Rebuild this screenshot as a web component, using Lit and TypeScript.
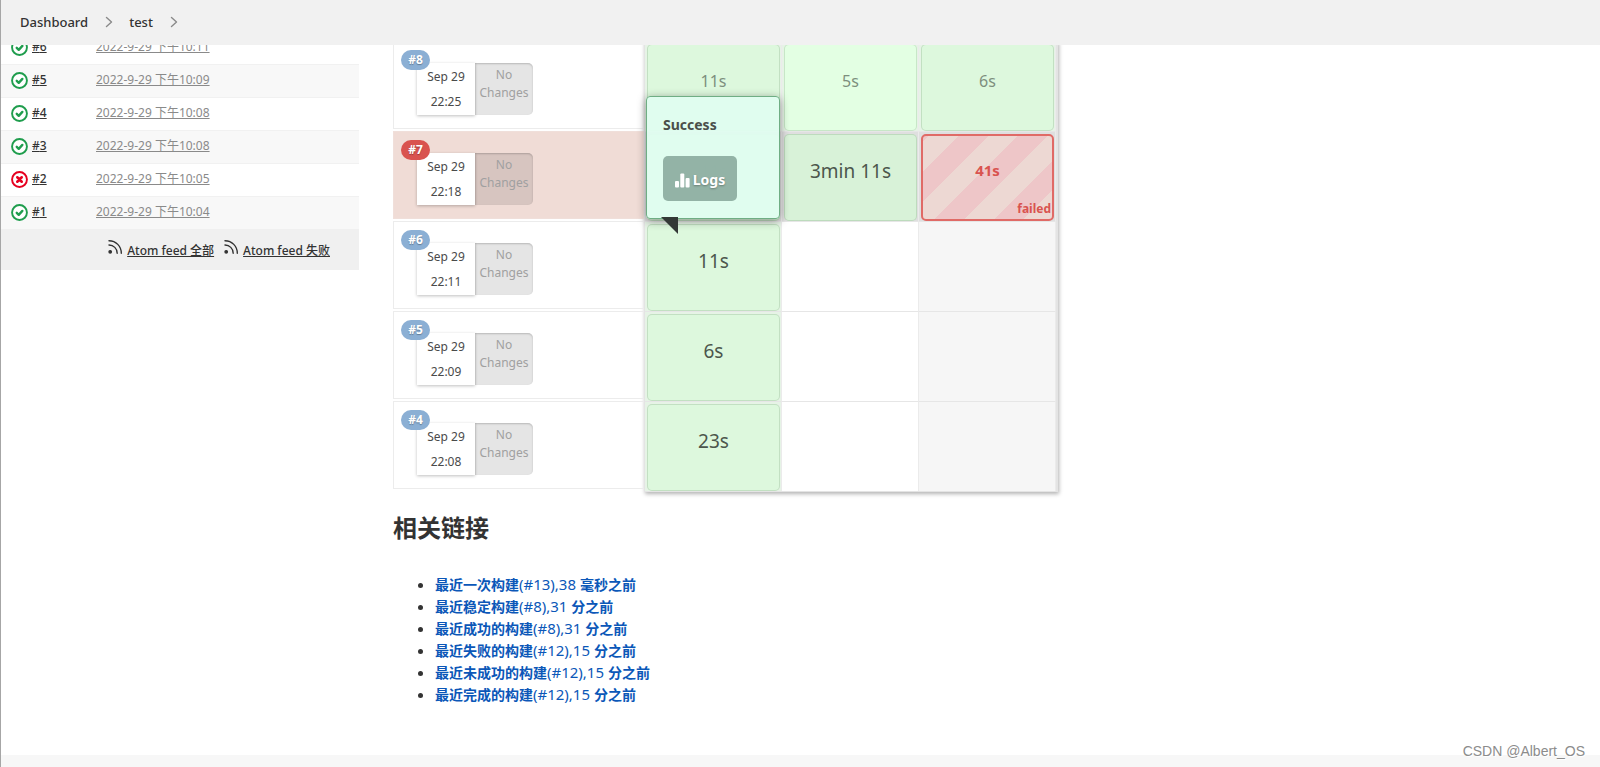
import { LitElement, html, css, svg, nothing } from "lit";
import { customElement } from "lit/decorators.js";
import { classMap } from "lit/directives/class-map.js";

interface Build {
  id: number;
  time: string;
  ok: boolean;
}

interface Stage {
  text: string;
  kind: "ok" | "failed" | "empty";
  tone?: "bright" | "dim";
  small?: boolean;
  popup?: boolean;
}

interface Run {
  id: number;
  date: string;
  time: string;
  failed?: boolean;
  stages: Stage[];
}

const BUILDS: Build[] = [
  { id: 6, time: "2022-9-29 下午10:11", ok: true },
  { id: 5, time: "2022-9-29 下午10:09", ok: true },
  { id: 4, time: "2022-9-29 下午10:08", ok: true },
  { id: 3, time: "2022-9-29 下午10:08", ok: true },
  { id: 2, time: "2022-9-29 下午10:05", ok: false },
  { id: 1, time: "2022-9-29 下午10:04", ok: true },
];

const EMPTY: Stage = { text: "", kind: "empty" };

const RUNS: Run[] = [
  {
    id: 8,
    date: "Sep 29",
    time: "22:25",
    stages: [
      { text: "11s", kind: "ok", small: true },
      { text: "5s", kind: "ok", small: true, tone: "bright" },
      { text: "6s", kind: "ok", small: true },
    ],
  },
  {
    id: 7,
    date: "Sep 29",
    time: "22:18",
    failed: true,
    stages: [
      { text: "11s", kind: "ok", small: true, popup: true },
      { text: "3min 11s", kind: "ok", tone: "dim" },
      { text: "41s", kind: "failed", small: true },
    ],
  },
  { id: 6, date: "Sep 29", time: "22:11", stages: [{ text: "11s", kind: "ok" }, EMPTY, EMPTY] },
  { id: 5, date: "Sep 29", time: "22:09", stages: [{ text: "6s", kind: "ok" }, EMPTY, EMPTY] },
  { id: 4, date: "Sep 29", time: "22:08", stages: [{ text: "23s", kind: "ok" }, EMPTY, EMPTY] },
];

const LINKS: [string, string, string][] = [
  ["最近一次构建", "(#13),38 ", "毫秒之前"],
  ["最近稳定构建", "(#8),31 ", "分之前"],
  ["最近成功的构建", "(#8),31 ", "分之前"],
  ["最近失败的构建", "(#12),15 ", "分之前"],
  ["最近未成功的构建", "(#12),15 ", "分之前"],
  ["最近完成的构建", "(#12),15 ", "分之前"],
];

const statusIcon = (ok: boolean) => html`<svg
  class="status"
  viewBox="0 0 16 16"
  role="img"
  aria-label=${ok ? "Success" : "Failed"}
>
  <circle cx="8" cy="8" r="7" fill="#fff" stroke=${ok ? "#1f9d4d" : "#e6001f"} stroke-width="1.8" />
  ${ok
    ? svg`<path d="M5.4 8.3l1.900 1.900 3.400-3.700" fill="none" stroke="#1f9d4d" stroke-width="2.200" stroke-linecap="round" stroke-linejoin="round" />`
    : svg`<path d="M5.9 5.9l4.2 4.2M10.1 5.9l-4.2 4.2" fill="none" stroke="#e6001f" stroke-width="2.4" stroke-linecap="round" />`}
</svg>`;

const feedIcon = html`<svg class="feed-icon" viewBox="0 0 14 14" aria-hidden="true">
  <g fill="none" stroke="#333" stroke-width="1.4" stroke-linecap="round">
    <path d="M1 .8c7 0 12.3 5.400 12.3 12.400" />
    <path d="M1 5c4.600 0 8.200 3.600 8.200 8.200" />
    <circle cx="2.200" cy="11.800" r="1.200" fill="#333" />
  </g>
</svg>`;

const chevron = html`<svg class="chevron" viewBox="0 0 8 12" aria-hidden="true">
  <path d="M1.500 1.500L6.500 6l-5 4.500" fill="none" stroke="#8a8a8a" stroke-width="1.400" stroke-linecap="round" stroke-linejoin="round" />
</svg>`;

@customElement("app-root")
export class AppRoot extends LitElement {
  static styles = css`
    :host {
      display: flex;
      flex-direction: column;
      box-sizing: border-box;
      height: 100vh;
      overflow: hidden;
      border-left: 1px solid #a6a6a6;
      background: #fff;
      color: #333;
      font-family: "Noto Sans", "Noto Sans CJK SC", sans-serif;
      font-size: 12px;
    }
    a {
      color: inherit;
    }
    ul,
    ol {
      list-style: none;
      margin: 0;
      padding: 0;
    }
    table {
      border-collapse: separate;
      border-spacing: 0;
    }
    td,
    th {
      padding: 0;
      font-weight: inherit;
      text-align: left;
    }
    .crumbs {
      position: relative;
      z-index: 5;
      flex: none;
      height: 45px;
      background: #f1f1f1;
    }
    .crumbs ol {
      display: flex;
      align-items: center;
      height: 44px;
      padding-left: 19px;
      font-size: 13px;
      font-weight: 500;
    }
    .crumbs li {
      display: flex;
      align-items: center;
      gap: 17px;
      margin-right: 16px;
    }
    .crumbs a {
      text-decoration: none;
    }
    .chevron {
      width: 8px;
      height: 12px;
    }
    .view {
      flex: 1;
      min-height: 0;
      overflow: hidden;
    }
    .content {
      display: grid;
      grid-template-columns: 358px minmax(0, 1fr);
      gap: 34px;
      margin-top: -14px;
    }
    .history {
      width: 100%;
    }
    .history td {
      height: 28px;
      padding-bottom: 4px;
      border-top: 1px solid #f1f1f1;
    }
    .history tr:nth-child(even) td {
      background: #f8f8f8;
    }
    .history .num {
      width: 95px;
    }
    .num-in {
      display: flex;
      align-items: center;
      gap: 4px;
      padding-left: 10px;
      color: #333;
      font-weight: 500;
    }
    .status {
      width: 17px;
      height: 17px;
      margin-top: 3px;
    }
    .time {
      color: #8a8a8a;
    }
    .feeds {
      display: flex;
      justify-content: flex-end;
      gap: 10px;
      height: 41px;
      padding-right: 29px;
      align-items: center;
      background: #f0f0f0;
      font-weight: 500;
    }
    .feeds span {
      display: flex;
      align-items: center;
      gap: 5px;
    }
    .feed-icon {
      width: 14px;
      height: 14px;
      margin-bottom: 5px;
    }
    .main {
      padding-top: 10px;
    }
    .pipeline {
      display: flex;
      align-items: flex-start;
    }
    .runs {
      width: 251px;
    }
    .run {
      position: relative;
      box-sizing: border-box;
      height: 88px;
      margin-bottom: 2px;
      padding: 21px 0 0 23px;
      border: 1px solid #ececec;
      display: flex;
      align-items: flex-start;
    }
    .run.failed {
      background: #f0dcd6;
      border-color: #f0dfda;
    }
    .badge {
      position: absolute;
      left: 7px;
      top: 8px;
      width: 29px;
      border-radius: 10px;
      background: #8bafd4;
      color: #fff;
      font-weight: 700;
      line-height: 20px;
      text-align: center;
      text-shadow: 0 1px 1px rgba(0, 0, 0, 0.3);
    }
    .failed .badge {
      background: #d9534f;
    }
    .when {
      box-sizing: border-box;
      width: 58px;
      height: 52px;
      padding-top: 1px;
      background: #fff;
      box-shadow: 0 1px 3px rgba(0, 0, 0, 0.25);
      color: #4a4a4a;
      line-height: 25px;
      text-align: center;
    }
    .when time {
      display: block;
    }
    .changes {
      box-sizing: border-box;
      width: 58px;
      height: 52px;
      padding-top: 3px;
      border-radius: 0 5px 5px 0;
      background: rgba(0, 0, 0, 0.1);
      box-shadow: inset 0 1px 2px rgba(0, 0, 0, 0.2);
      color: #a0a0a0;
      line-height: 18px;
      text-align: center;
    }
    .stages {
      width: 414px;
      table-layout: fixed;
      border: solid #e4e4e4;
      border-width: 0 2px 1px 1px;
      box-shadow: 1px 2px 4px rgba(0, 0, 0, 0.3);
    }
    .stages td {
      position: relative;
      box-sizing: border-box;
      height: 90px;
      border-top: 1px solid #e6e6e6;
      border-right: 1px solid #ebebeb;
      vertical-align: top;
    }
    .stages td:last-child {
      background: #f6f6f6;
    }
    .stages td.filled {
      background: #e6f3e6;
    }
    .stages .hot td.filled {
      background: #dfdfdf;
    }
    .cell {
      box-sizing: border-box;
      height: 87px;
      margin: 2px 1px 0 2px;
      border: 1px solid rgba(0, 60, 0, 0.12);
      border-radius: 5px;
      background: #ddf8dd;
      color: #4c564c;
      font-size: 19px;
      line-height: 72px;
      text-align: center;
    }
    .cell.bright {
      background: #e3ffe3;
    }
    .cell.dim {
      background: #d8f2d8;
    }
    .cell.small {
      color: #7d8f7d;
      font-size: 16px;
    }
    .cell.bad {
      border: 2px solid #e06a66;
      background: repeating-linear-gradient(
        135deg,
        #eec6c8 0 4px,
        #edd8d3 4px 25px,
        #eec6c8 25px 42px
      );
      color: #d9534f;
      font-size: 15px;
      font-weight: 700;
      line-height: 68px;
    }
    .fail-label {
      position: absolute;
      right: 4px;
      bottom: 4px;
      font-size: 12px;
      line-height: 16px;
    }
    .popup {
      position: absolute;
      z-index: 2;
      left: 1px;
      bottom: 2px;
      box-sizing: border-box;
      width: 134px;
      height: 123px;
      padding: 16px 16px 0;
      border: 1px solid #6fae84;
      border-radius: 4px;
      background: rgba(224, 253, 240, 0.94);
      box-shadow: 0 2px 10px rgba(0, 0, 0, 0.4);
      color: #4a4f4a;
      font-size: 14px;
      font-weight: 700;
      line-height: 24px;
    }
    .popup::after {
      content: "";
      position: absolute;
      left: 14px;
      top: 120px;
      border-top: 17px solid #333836;
      border-left: 17px solid transparent;
    }
    .logs {
      display: flex;
      align-items: center;
      justify-content: center;
      gap: 3px;
      width: 74px;
      height: 45px;
      margin-top: 19px;
      padding: 3px 0 0;
      border: 0;
      border-radius: 5px;
      background: rgba(140, 173, 159, 0.92);
      color: #fff;
      font: inherit;
      text-shadow: 0 1px 2px rgba(0, 0, 0, 0.3);
    }
    .logs svg {
      width: 15px;
      height: 15px;
    }
    h2 {
      margin: 20px 0 29px;
      font-size: 24px;
      line-height: 32px;
    }
    .links {
      list-style: disc;
      padding-left: 42px;
      font-size: 15px;
      line-height: 22px;
    }
    .links b {
      font-size: 14px;
      line-height: 16px;
    }
    .links a {
      color: #0b57b8;
      text-decoration: none;
    }
    footer {
      position: relative;
      flex: none;
      height: 12px;
      background: #f7f7f7;
    }
    .mark {
      position: absolute;
      right: 15px;
      bottom: 7px;
      color: #8c8c8c;
      font-family: "Liberation Sans", sans-serif;
      font-size: 14px;
      line-height: 18px;
      text-shadow: 1px 1px 0 #fff;
    }
  `;

  private renderStage(s: Stage) {
    if (s.kind === "empty") return html`<td></td>`;
    const failed = s.kind === "failed";
    return html`<td class="filled">
      <div
        class=${classMap({
          cell: true,
          small: !!s.small,
          bright: s.tone === "bright",
          dim: s.tone === "dim",
          bad: failed,
        })}
      >
        ${s.text}${failed ? html`<span class="fail-label">failed</span>` : nothing}
      </div>
      ${s.popup
        ? html`<div class="popup">
            Success
            <button class="logs" type="button">
              <svg viewBox="0 0 15 15" fill="#fff" aria-hidden="true">
                <rect x="0" y="8" width="4" height="6.500" rx="1" />
                <rect x="5.300" y="0.500" width="4" height="14" rx="1" />
                <rect x="10.600" y="5" width="4" height="9.500" rx="1" />
              </svg>
              Logs
            </button>
          </div>`
        : nothing}
    </td>`;
  }

  render() {
    return html`
      <nav class="crumbs" aria-label="Breadcrumb">
        <ol>
          <li><a href="#">Dashboard</a>${chevron}</li>
          <li><a href="#">test</a>${chevron}</li>
        </ol>
      </nav>
      <div class="view">
        <div class="content">
          <aside>
            <table class="history">
              <tbody>
                ${BUILDS.map(
                  (b) => html`<tr>
                    <td class="num">
                      <div class="num-in">${statusIcon(b.ok)}<a href="#">#${b.id}</a></div>
                    </td>
                    <td><a class="time" href="#">${b.time}</a></td>
                  </tr>`
                )}
              </tbody>
            </table>
            <div class="feeds">
              <span>${feedIcon}<a href="#">Atom feed 全部</a></span>
              <span>${feedIcon}<a href="#">Atom feed 失败</a></span>
            </div>
          </aside>
          <main class="main">
            <div class="pipeline">
              <ul class="runs">
                ${RUNS.map(
                  (r) => html`<li class=${classMap({ run: true, failed: !!r.failed })}>
                    <span class="badge">#${r.id}</span>
                    <div class="when"><time>${r.date}</time><time>${r.time}</time></div>
                    <div class="changes">No<br />Changes</div>
                  </li>`
                )}
              </ul>
              <table class="stages">
                <tbody>
                  ${RUNS.map(
                    (r) => html`<tr class=${classMap({ hot: !!r.failed })}>
                      ${r.stages.map((s) => this.renderStage(s))}
                    </tr>`
                  )}
                </tbody>
              </table>
            </div>
            <h2>相关链接</h2>
            <ul class="links">
              ${LINKS.map(
                ([a, b, c]) => html`<li><a href="#"><b>${a}</b>${b}<b>${c}</b></a></li>`
              )}
            </ul>
          </main>
        </div>
      </div>
      <footer><span class="mark">CSDN @Albert_OS</span></footer>
    `;
  }
}
